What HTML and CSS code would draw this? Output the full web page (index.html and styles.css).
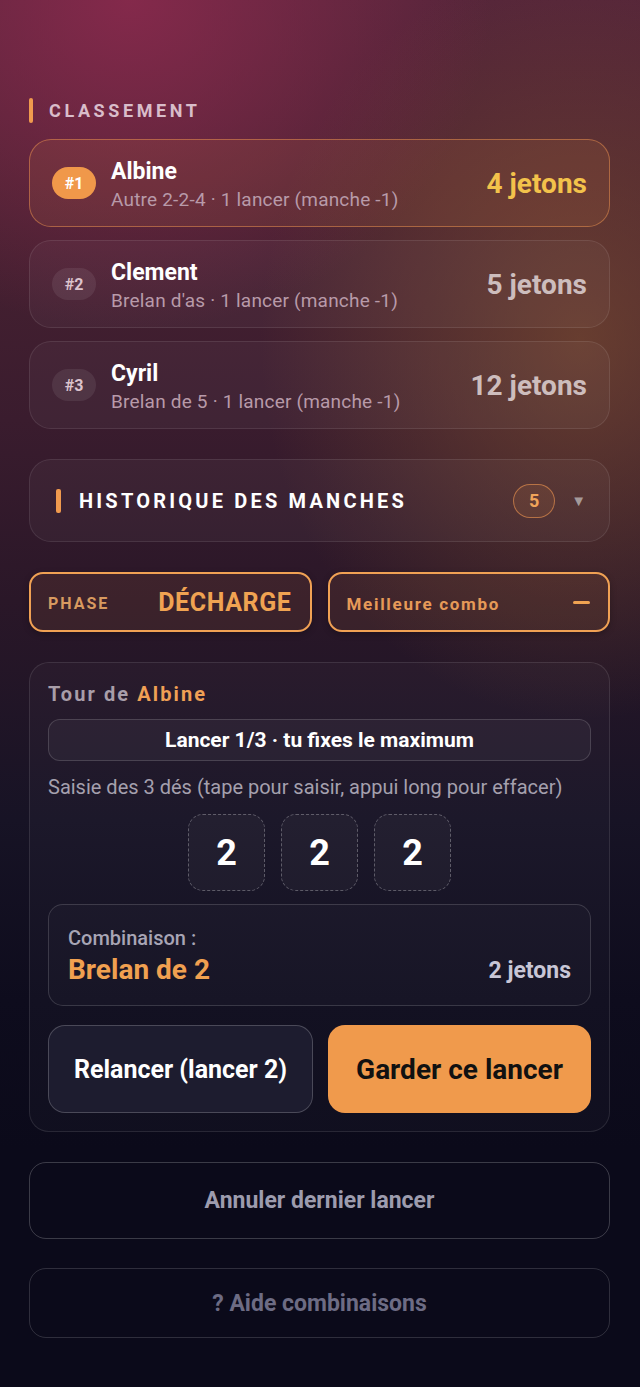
FILE: index.html
```html
<!DOCTYPE html>
<html lang="fr">
<head>
<meta charset="utf-8">
<meta name="viewport" content="width=device-width, initial-scale=1">
<title>Classement</title>
<link rel="stylesheet" href="styles.css">
</head>
<body>
<main class="page">
  <section class="ranking">
    <h2 class="section-title"><span class="bar"></span>CLASSEMENT</h2>
    <div class="player first">
      <span class="rank">#1</span>
      <div class="info">
        <div class="name">Albine</div>
        <div class="detail">Autre 2-2-4 · 1 lancer (manche -1)</div>
      </div>
      <div class="score">4 jetons</div>
    </div>
    <div class="player">
      <span class="rank">#2</span>
      <div class="info">
        <div class="name">Clement</div>
        <div class="detail">Brelan d'as · 1 lancer (manche -1)</div>
      </div>
      <div class="score">5 jetons</div>
    </div>
    <div class="player">
      <span class="rank">#3</span>
      <div class="info">
        <div class="name">Cyril</div>
        <div class="detail">Brelan de 5 · 1 lancer (manche -1)</div>
      </div>
      <div class="score">12 jetons</div>
    </div>
  </section>

  <section class="history">
    <span class="bar"></span>
    <span class="history-title">HISTORIQUE DES MANCHES</span>
    <span class="count">5</span>
    <span class="caret">▼</span>
  </section>

  <section class="status">
    <div class="stat">
      <span class="stat-label">PHASE</span>
      <span class="stat-value">DÉCHARGE</span>
    </div>
    <div class="stat">
      <span class="stat-label combo">Meilleure combo</span>
      <span class="dash"></span>
    </div>
  </section>

  <section class="panel">
    <div class="turn">Tour de <span class="turn-name">Albine</span></div>
    <div class="banner">Lancer 1/3 · tu fixes le maximum</div>
    <div class="hint">Saisie des 3 dés (tape pour saisir, appui long pour effacer)</div>
    <div class="dice">
      <div class="die">2</div>
      <div class="die">2</div>
      <div class="die">2</div>
    </div>
    <div class="combo-box">
      <div class="combo-label">Combinaison :</div>
      <div class="combo-row">
        <span class="combo-name">Brelan de 2</span>
        <span class="combo-value">2 jetons</span>
      </div>
    </div>
    <div class="actions">
      <button class="btn secondary">Relancer (lancer 2)</button>
      <button class="btn primary">Garder ce lancer</button>
    </div>
  </section>

  <button class="wide undo">Annuler dernier lancer</button>
  <button class="wide help">? Aide combinaisons</button>
</main>
</body>
</html>
```

FILE: styles.css
```css
* { box-sizing: border-box; }
html, body { margin: 0; padding: 0; }
body {
  min-height: 1387px;
  font-family: Roboto, "Noto Sans", "Liberation Sans", sans-serif;
  color: #fff;
  background-color: #0b0a1a;
  background-image:
    radial-gradient(ellipse 360px 330px at 130px 0px, rgba(140, 42, 78, 0.85), rgba(140, 42, 78, 0) 100%),
    radial-gradient(ellipse 320px 380px at 580px 340px, rgba(130, 82, 48, 0.6), rgba(130, 82, 48, 0) 100%),
    linear-gradient(180deg, #55253a 0px, #4a2232 180px, #3a1c2e 420px, #2a1728 600px, #171325 820px, #0e0c1d 1000px, #0b0a1a 1150px);
}
.page {
  padding: 97px 30px 40px 29px;
  display: flex;
  flex-direction: column;
  gap: 30px;
}
.ranking { display: flex; flex-direction: column; gap: 13px; }
.section-title {
  margin: 0 0 3px 0;
  display: flex;
  align-items: center;
  gap: 16px;
  height: 26px;
  font-size: 18px;
  font-weight: 700;
  letter-spacing: 3.6px;
  color: #d9bdca;
}
.bar {
  display: inline-block;
  width: 4px;
  height: 25px;
  border-radius: 2px;
  background: #f09a4e;
  flex: none;
}
.player {
  height: 88px;
  display: flex;
  align-items: center;
  padding: 0 22px 0 22px;
  border-radius: 22px;
  border: 1px solid rgba(255, 255, 255, 0.09);
  background: rgba(255, 255, 255, 0.035);
}
.player.first {
  border-color: rgba(240, 150, 80, 0.5);
  background: rgba(240, 150, 80, 0.1);
}
.rank {
  width: 44px;
  height: 32px;
  border-radius: 16px;
  display: flex;
  align-items: center;
  justify-content: center;
  font-size: 16px;
  font-weight: 700;
  color: #dcc3cd;
  background: rgba(255, 255, 255, 0.08);
  flex: none;
}
.first .rank { background: #f0984a; color: #fff; }
.info { margin-left: 15px; flex: 1; padding-top: 4px; }
.name { font-size: 23px; font-weight: 700; line-height: 26px; }
.detail { font-size: 19px; color: #b89aa9; line-height: 24px; margin-top: 3px; letter-spacing: 0.2px; }
.score { font-size: 28px; font-weight: 700; color: #cdbdbd; }
.first .score { color: #f3c24b; }

.history {
  height: 83px;
  display: flex;
  align-items: center;
  padding: 0 23px 0 26px;
  border-radius: 22px;
  border: 1px solid rgba(255, 255, 255, 0.09);
  background: rgba(255, 255, 255, 0.035);
}
.history .bar { width: 5px; height: 24px; }
.history-title {
  margin-left: 18px;
  flex: 1;
  font-size: 20px;
  font-weight: 700;
  letter-spacing: 3.2px;
  color: #fff;
}
.count {
  width: 42px;
  height: 34px;
  border-radius: 17px;
  border: 1px solid rgba(240, 150, 80, 0.6);
  background: rgba(240, 150, 80, 0.1);
  display: flex;
  align-items: center;
  justify-content: center;
  font-size: 18px;
  font-weight: 700;
  color: #f0a45a;
}
.caret { margin-left: 16px; font-size: 15px; color: #a59a9a; }

.status { display: flex; gap: 16px; }
.stat {
  flex: 1;
  height: 60px;
  border: 2px solid #f0a154;
  border-radius: 14px;
  background: rgba(240, 150, 80, 0.09);
  display: flex;
  align-items: center;
  justify-content: space-between;
  padding: 0 18px 0 17px;
  box-shadow: 0 2px 6px rgba(0, 0, 0, 0.25);
}
.stat-label {
  font-size: 16px;
  font-weight: 700;
  letter-spacing: 2px;
  color: #d89a60;
  padding-top: 3px;
}
.stat-label.combo { font-size: 17px; letter-spacing: 1.7px; color: #e69a58; }
.stat-value {
  font-size: 25px;
  font-weight: 700;
  letter-spacing: 0.6px;
  color: #f0a352;
}
.dash {
  width: 17px;
  height: 3px;
  border-radius: 2px;
  background: #f0a352;
}

.panel {
  border-radius: 20px;
  border: 1px solid rgba(255, 255, 255, 0.1);
  background: rgba(255, 255, 255, 0.025);
  padding: 20px 18px 18px 18px;
  display: flex;
  flex-direction: column;
}
.turn {
  font-size: 20px;
  font-weight: 700;
  letter-spacing: 2.1px;
  line-height: 22px;
  color: #a89ea9;
}
.turn-name { color: #f0a055; }
.banner {
  margin-top: 14px;
  height: 42px;
  border-radius: 12px;
  border: 1px solid rgba(255, 255, 255, 0.15);
  background: rgba(255, 255, 255, 0.04);
  display: flex;
  align-items: center;
  justify-content: center;
  font-size: 21px;
  font-weight: 700;
  color: #fff;
}
.hint {
  margin-top: 15px;
  font-size: 20px;
  line-height: 22px;
  color: #a5a0ae;
}
.dice {
  margin-top: 16px;
  display: flex;
  justify-content: center;
  gap: 16px;
}
.die {
  width: 77px;
  height: 77px;
  border-radius: 15px;
  border: 1.5px dashed rgba(255, 255, 255, 0.28);
  background: rgba(255, 255, 255, 0.03);
  display: flex;
  align-items: center;
  justify-content: center;
  font-size: 36px;
  font-weight: 700;
  color: #fff;
}
.combo-box {
  margin-top: 13px;
  height: 102px;
  border-radius: 15px;
  border: 1px solid rgba(255, 255, 255, 0.15);
  background: rgba(255, 255, 255, 0.02);
  padding: 22px 19px 0 19px;
}
.combo-label { font-size: 20px; font-weight: 500; line-height: 22px; color: #a8a5b5; }
.combo-row {
  margin-top: 4px;
  display: flex;
  align-items: center;
  justify-content: space-between;
}
.combo-name { font-size: 28px; font-weight: 700; color: #f0a050; line-height: 34px; }
.combo-value { font-size: 23px; font-weight: 700; color: #c8c6d6; }
.actions {
  margin-top: 19px;
  display: flex;
  gap: 15px;
}
.btn {
  flex: 1;
  height: 88px;
  border-radius: 17px;
  font-family: inherit;
  font-weight: 700;
  cursor: pointer;
}
.btn.secondary {
  border: 1.5px solid rgba(255, 255, 255, 0.2);
  background: #1d1c2f;
  color: #fff;
  font-size: 25px;
}
.btn.primary {
  border: none;
  background: #f09a4c;
  color: #111;
  font-size: 28px;
}
.wide {
  width: 100%;
  border-radius: 17px;
  border: 1.5px solid rgba(255, 255, 255, 0.2);
  background: transparent;
  font-family: inherit;
  font-size: 23px;
  font-weight: 700;
  cursor: pointer;
}
.undo { height: 77px; color: #9d9cae; }
.help { height: 70px; margin-top: -1px; color: #6d6c84; border-color: rgba(255, 255, 255, 0.15); }
```
